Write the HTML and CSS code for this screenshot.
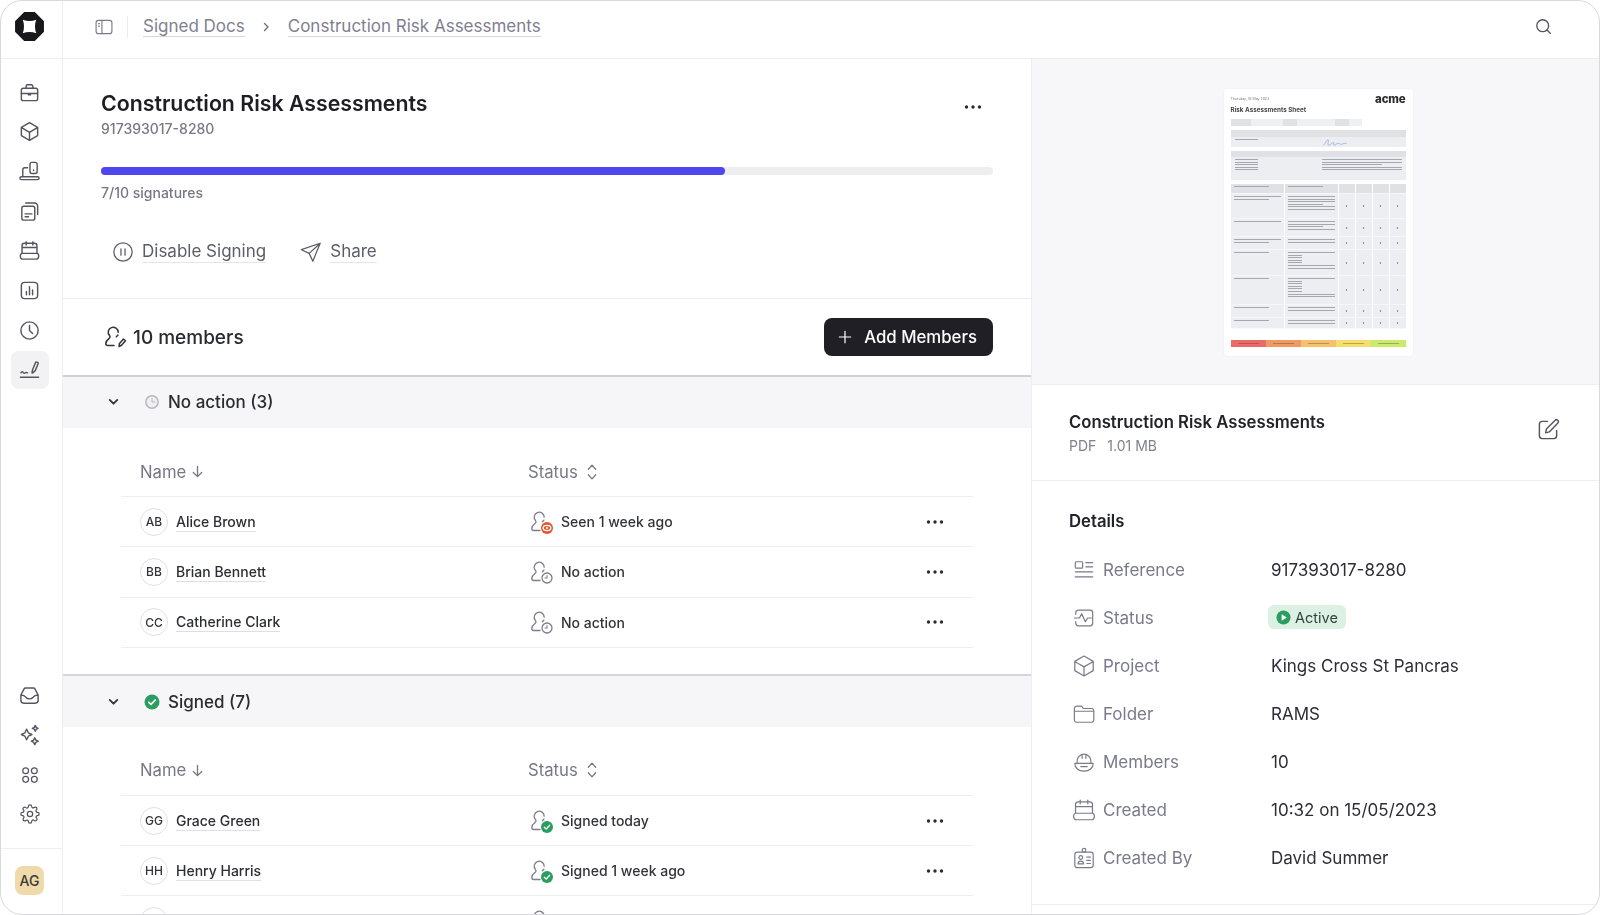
FILE: index.html
```html
<!DOCTYPE html>
<html lang="en">
<head>
<meta charset="utf-8">
<title>Construction Risk Assessments</title>
<link rel="stylesheet" href="styles.css">
</head>
<body>
<svg class="sprite" aria-hidden="true">
  <defs>
    <symbol id="i-brief" viewBox="0 0 24 24"><rect x="3.5" y="7.5" width="17" height="13" rx="2"/><path d="M8.5 7.5V5.5a1.5 1.5 0 0 1 1.5-1.5h4a1.5 1.5 0 0 1 1.5 1.5v2M3.5 13h17M11 13h2v1.5h-2z"/></symbol>
    <symbol id="i-box" viewBox="0 0 24 24"><path d="M12 2.8l8.5 4.9v8.6L12 21.2l-8.5-4.9V7.7zM3.8 8l8.2 4.8L20.2 8M12 12.8v8.2"/></symbol>
    <symbol id="i-laptop" viewBox="0 0 24 24"><rect x="12.5" y="2.5" width="7.5" height="11.5" rx="2"/><path d="M5 17.5V10a2 2 0 0 1 2-2h3M3.5 17.5h17a1.5 1.5 0 0 1 1.5 1.5 1.5 1.5 0 0 1-1.5 1.5h-17A1.5 1.5 0 0 1 2 19a1.5 1.5 0 0 1 1.5-1.5zM16.2 10.5v.4"/></symbol>
    <symbol id="i-docs" viewBox="0 0 24 24"><rect x="4" y="6.5" width="13.5" height="14.5" rx="2"/><path d="M8 3.2h9.5a3 3 0 0 1 3 3V15M7.5 14.5h7M7.5 17.5h3.5"/></symbol>
    <symbol id="i-cal" viewBox="0 0 24 24"><path d="M4.200 15V7a2.500 2.500 0 0 1 2.500-2.500h10.600A2.500 2.500 0 0 1 19.800 7v8M4.200 8.800h15.600M8.500 2.800v3.400M15.500 2.800v3.400M4.500 15h15a2 2 0 0 1 2 2v1.500a2.500 2.500 0 0 1-2.500 2.500H5a2.500 2.500 0 0 1-2.500-2.500V17a2 2 0 0 1 2-2z"/></symbol>
    <symbol id="i-chart" viewBox="0 0 24 24"><rect x="3.500" y="3.500" width="17" height="17" rx="3.500"/><path d="M8.800 16.500v-3.500M12 16.500V8M15.200 16.500v-5"/></symbol>
    <symbol id="i-clock" viewBox="0 0 24 24"><circle cx="12" cy="12" r="9"/><path d="M12 6.800V12l3.200 3.200"/></symbol>
    <symbol id="i-sign" viewBox="0 0 24 24"><path d="M2.500 20h19M3 15.500c1-1.500 1.800-1.500 2.500-.3.700 1 1.200.8 2 .3.700-.4 1.500-.4 2.500 0M14.500 15.500l.8-3.500 3-7.200a1 1 0 0 1 1.300-.5l.9.400a1 1 0 0 1 .5 1.300l-3 7.200-2.700 2.500z"/></symbol>
    <symbol id="i-inbox" viewBox="0 0 24 24"><path d="M3 11.500l3.200-6.200A2 2 0 0 1 8 4.200h8a2 2 0 0 1 1.800 1.100l3.200 6.200V17a3 3 0 0 1-3 3H6a3 3 0 0 1-3-3zM3 11.500c3 0 4 .5 5.200 2.300.8 1 2 1.700 3.800 1.700s3-.7 3.800-1.700C17 12 18 11.500 21 11.500"/></symbol>
    <symbol id="i-spark" viewBox="0 0 24 24"><path d="M9 6.500l1.800 3.700 3.700 1.800-3.700 1.800L9 17.500l-1.800-3.700L3.500 12l3.700-1.800zM18 2.500l1 2 2 1-2 1-1 2-1-2-2-1 2-1zM17.500 15.500l1.200 2.300 2.300 1.200-2.300 1.200-1.200 2.300-1.200-2.300L14 19l2.300-1.200z"/></symbol>
    <symbol id="i-apps" viewBox="0 0 24 24"><circle cx="6.800" cy="6.800" r="3.500"/><circle cx="17.200" cy="6.800" r="3.500"/><circle cx="6.800" cy="17.200" r="3.500"/><circle cx="17.200" cy="17.200" r="3.500"/></symbol>
    <symbol id="i-gear" viewBox="0 0 24 24"><circle cx="12" cy="12" r="3.200"/><path d="M19.400 15a1.650 1.650 0 0 0 .33 1.820l.06.06a2 2 0 0 1 0 2.830 2 2 0 0 1-2.830 0l-.06-.06a1.650 1.650 0 0 0-1.820-.33 1.650 1.650 0 0 0-1 1.510V21a2 2 0 0 1-2 2 2 2 0 0 1-2-2v-.09A1.650 1.650 0 0 0 9 19.400a1.650 1.650 0 0 0-1.820.33l-.06.06a2 2 0 0 1-2.830 0 2 2 0 0 1 0-2.830l.06-.06a1.650 1.650 0 0 0 .33-1.820 1.650 1.650 0 0 0-1.510-1H3a2 2 0 0 1-2-2 2 2 0 0 1 2-2h.09A1.650 1.650 0 0 0 4.600 9a1.650 1.650 0 0 0-.33-1.820l-.06-.06a2 2 0 0 1 0-2.830 2 2 0 0 1 2.830 0l.06.06a1.650 1.650 0 0 0 1.820.33H9a1.650 1.650 0 0 0 1-1.510V3a2 2 0 0 1 2-2 2 2 0 0 1 2 2v.09a1.650 1.650 0 0 0 1 1.510 1.650 1.650 0 0 0 1.820-.33l.06-.06a2 2 0 0 1 2.830 0 2 2 0 0 1 0 2.830l-.06.06a1.650 1.650 0 0 0-.33 1.820V9a1.650 1.650 0 0 0 1.510 1H21a2 2 0 0 1 2 2 2 2 0 0 1-2 2h-.09a1.650 1.650 0 0 0-1.510 1z"/></symbol>
    <symbol id="i-person" viewBox="0 0 24 24"><path d="M15.200 7.200a5 5 0 1 0-8.700 3.400c.8.900.6 2-.3 2.700C4 15 2.800 16.500 2.800 18.500c0 1.300.9 2 2 2H11M13.300 11.800c.4-.6 1.100-1 1.600-1.700"/></symbol>
    <symbol id="i-dots" viewBox="0 0 18 4"><circle cx="2.500" cy="2" r="1.700"/><circle cx="9" cy="2" r="1.700"/><circle cx="15.500" cy="2" r="1.700"/></symbol>
    <symbol id="i-sort" viewBox="0 0 16 24"><path d="M4 9l4-4.500L12 9M4 15l4 4.500 4-4.500"/></symbol>
    <symbol id="i-down" viewBox="0 0 16 16"><path d="M8 2.500v11M3.500 9L8 13.500 12.500 9"/></symbol>
    <symbol id="i-chev" viewBox="0 0 12 12"><path d="M2.500 4.500L6 8l3.500-3.500"/></symbol>
    <symbol id="b-eye" viewBox="0 0 24 24"><use href="#i-person" class="stroke-person"/><circle cx="18" cy="18" r="6" class="fill-red"/><ellipse cx="18" cy="18" rx="3.800" ry="2.600" class="badge-line"/><circle cx="18" cy="18" r="1" class="fill-white"/></symbol>
    <symbol id="b-clock" viewBox="0 0 24 24"><use href="#i-person" class="stroke-person"/><circle cx="18" cy="18" r="5" class="badge-clock"/><path d="M18 15.500V18h-2" class="badge-hand"/></symbol>
    <symbol id="b-check" viewBox="0 0 24 24"><use href="#i-person" class="stroke-person"/><circle cx="18" cy="18" r="6" class="fill-green"/><path d="M15.300 18.200l1.900 1.800 3.500-3.700" class="badge-line"/></symbol>
  </defs>
</svg>

<div class="app">
  <aside class="side">
    <div class="logo-cell">
      <svg class="logo" viewBox="0 0 28 28"><path class="logo-bg" d="M9 .6h10L27.400 9v10L19 27.400H9L.6 19V9z"/><path class="logo-fg" d="M7.500 7.500c4 1.600 9 1.600 13 0-1.600 4-1.600 9 0 13-4-1.600-9-1.600-13 0 1.600-4 1.600-9 0-13z"/></svg>
    </div>
    <nav class="nav">
      <a class="nav-item"><svg class="ic"><use href="#i-brief"/></svg></a>
      <a class="nav-item"><svg class="ic"><use href="#i-box"/></svg></a>
      <a class="nav-item"><svg class="ic"><use href="#i-laptop"/></svg></a>
      <a class="nav-item"><svg class="ic"><use href="#i-docs"/></svg></a>
      <a class="nav-item"><svg class="ic"><use href="#i-cal"/></svg></a>
      <a class="nav-item"><svg class="ic"><use href="#i-chart"/></svg></a>
      <a class="nav-item"><svg class="ic"><use href="#i-clock"/></svg></a>
      <a class="nav-item is-active"><svg class="ic"><use href="#i-sign"/></svg></a>
    </nav>
    <nav class="nav nav-bottom">
      <a class="nav-item"><svg class="ic"><use href="#i-inbox"/></svg></a>
      <a class="nav-item"><svg class="ic"><use href="#i-spark"/></svg></a>
      <a class="nav-item"><svg class="ic ic-sm"><use href="#i-apps"/></svg></a>
      <a class="nav-item"><svg class="ic ic-sm"><use href="#i-gear"/></svg></a>
    </nav>
    <div class="side-foot"><span class="me">AG</span></div>
  </aside>

  <div class="content">
    <header class="topbar">
      <svg class="panel-ic" viewBox="0 0 24 24"><rect x="2.500" y="4" width="19" height="16" rx="3"/><path d="M9.500 4v16M5.500 8h1M5.500 11h1"/></svg>
      <span class="topbar-sep"></span>
      <a class="crumb">Signed Docs</a>
      <svg class="crumb-chev" viewBox="0 0 12 12"><path d="M4.500 2.500L8 6 4.500 9.500"/></svg>
      <a class="crumb">Construction Risk Assessments</a>
      <svg class="search-ic" viewBox="0 0 24 24"><circle cx="11" cy="11" r="7.500"/><path d="M16.500 16.500L20.500 20.500"/></svg>
    </header>

    <div class="body">
      <main class="main">
        <section class="doc-head">
          <div class="doc-title-row">
            <div>
              <h1 class="doc-title">Construction Risk Assessments</h1>
              <div class="doc-ref">917393017-8280</div>
            </div>
            <svg class="dots dots-head"><use href="#i-dots"/></svg>
          </div>
          <div class="progress"><div class="progress-fill"></div></div>
          <div class="sigs">7/10 signatures</div>
          <div class="actions">
            <a class="action">
              <svg class="action-ic" viewBox="0 0 24 24"><circle cx="12" cy="12" r="10"/><path d="M9.800 8.500v7M14.200 8.500v7"/></svg>
              <span class="action-label">Disable Signing</span>
            </a>
            <a class="action">
              <svg class="action-ic" viewBox="0 0 24 24"><path d="M22 2.500L1.500 9.500l8.500 4 4 8.500zM22 2.500L10 13.500"/></svg>
              <span class="action-label">Share</span>
            </a>
          </div>
        </section>

        <section class="members-bar">
          <div class="members-count">
            <svg class="members-ic" viewBox="0 0 24 24"><use href="#i-person"/><path d="M16 21.500l.5-3 4-4.500 2 1.700-4 4.600z"/></svg>
            <span>10 members</span>
          </div>
          <button class="add-btn"><svg class="plus" viewBox="0 0 16 16"><path d="M8 1.500v13M1.500 8h13"/></svg>Add Members</button>
        </section>

        <section class="group">
          <div class="group-head">
            <svg class="chev"><use href="#i-chev"/></svg>
            <svg class="group-ic" viewBox="0 0 16 16"><circle class="gi-ring" cx="8" cy="8" r="6.200"/><path class="gi-hand" d="M8 4.500V8h3"/></svg>
            <span>No action (3)</span>
          </div>
          <div class="table">
            <div class="row row-head">
              <div class="th th-name">Name<svg class="th-down"><use href="#i-down"/></svg></div>
              <div class="th">Status<svg class="th-sort"><use href="#i-sort"/></svg></div>
              <div></div>
            </div>
            <div class="row">
              <div class="person"><span class="avatar">AB</span><span class="name">Alice Brown</span></div>
              <div class="status"><svg class="status-ic"><use href="#b-eye"/></svg>Seen 1 week ago</div>
              <div class="more"><svg class="dots"><use href="#i-dots"/></svg></div>
            </div>
            <div class="row">
              <div class="person"><span class="avatar">BB</span><span class="name">Brian Bennett</span></div>
              <div class="status"><svg class="status-ic"><use href="#b-clock"/></svg>No action</div>
              <div class="more"><svg class="dots"><use href="#i-dots"/></svg></div>
            </div>
            <div class="row">
              <div class="person"><span class="avatar">CC</span><span class="name">Catherine Clark</span></div>
              <div class="status"><svg class="status-ic"><use href="#b-clock"/></svg>No action</div>
              <div class="more"><svg class="dots"><use href="#i-dots"/></svg></div>
            </div>
          </div>
        </section>

        <section class="group">
          <div class="group-head">
            <svg class="chev"><use href="#i-chev"/></svg>
            <svg class="group-ic" viewBox="0 0 16 16"><circle class="gi-green" cx="8" cy="8" r="7.500"/><path class="gi-check" d="M4.800 8.300l2.200 2.100 4.200-4.400"/></svg>
            <span>Signed (7)</span>
          </div>
          <div class="table">
            <div class="row row-head">
              <div class="th th-name">Name<svg class="th-down"><use href="#i-down"/></svg></div>
              <div class="th">Status<svg class="th-sort"><use href="#i-sort"/></svg></div>
              <div></div>
            </div>
            <div class="row">
              <div class="person"><span class="avatar">GG</span><span class="name">Grace Green</span></div>
              <div class="status"><svg class="status-ic"><use href="#b-check"/></svg>Signed today</div>
              <div class="more"><svg class="dots"><use href="#i-dots"/></svg></div>
            </div>
            <div class="row">
              <div class="person"><span class="avatar">HH</span><span class="name">Henry Harris</span></div>
              <div class="status"><svg class="status-ic"><use href="#b-check"/></svg>Signed 1 week ago</div>
              <div class="more"><svg class="dots"><use href="#i-dots"/></svg></div>
            </div>
            <div class="row">
              <div class="person"><span class="avatar"></span></div>
              <div class="status"><svg class="status-ic"><use href="#b-check"/></svg></div>
              <div class="more"></div>
            </div>
          </div>
        </section>
      </main>

      <aside class="panel">
        <div class="preview">
          <div class="sheet">
            <div class="sheet-inner">
              <div class="sh-top"><span class="sh-date">Thursday, 18 May 2023</span><span class="sh-logo">acme</span></div>
              <div class="sh-title">Risk Assessments Sheet</div>
              <div class="sh-meta"><b class="m1"></b><i class="m2"></i><b class="m3"></b><i class="m4"></i><b class="m5"></b><i class="m6"></i></div>
              <div class="sh-two">
                <div class="sh-hd"></div><div class="sh-hd"></div>
                <div class="sh-bd sh-bd-a"><span class="ln ln-s"></span></div>
                <div class="sh-bd sh-bd-a"><svg class="sh-sig" viewBox="0 0 30 8"><path d="M2 7c3-3 3-6 5-6S5 7 8 7s3-3 5-3-1 3 1 3 3-2 5-2 2 2 4 1 3-1 5-1"/></svg></div>
              </div>
              <div class="sh-two">
                <div class="sh-hd"></div><div class="sh-hd"></div>
                <div class="sh-bd sh-bd-b"><span class="ln ln-s"></span><span class="ln ln-s"></span><span class="ln ln-s"></span><span class="ln ln-s"></span><span class="ln ln-s"></span></div>
                <div class="sh-bd sh-bd-b"><span class="ln"></span><span class="ln"></span><span class="ln ln-m"></span><span class="ln"></span><span class="ln"></span></div>
              </div>
              <div class="sh-table">
                <div class="st-row st-head"><div><span class="ln ln-m"></span></div><div><span class="ln ln-m"></span></div><div></div><div></div><div></div><div></div></div>
                <div class="st-row r1"><div><span class="ln"></span><span class="ln ln-m"></span></div><div><span class="ln"></span><span class="ln"></span><span class="ln"></span><span class="ln ln-m"></span><span class="ln"></span><span class="ln"></span></div><div class="st-n"><u></u></div><div class="st-n"><u></u></div><div class="st-n"><u></u></div><div class="st-n"><u></u></div></div>
                <div class="st-row r2"><div><span class="ln"></span></div><div><span class="ln"></span><span class="ln"></span><span class="ln ln-m"></span><span class="ln"></span></div><div class="st-n"><u></u></div><div class="st-n"><u></u></div><div class="st-n"><u></u></div><div class="st-n"><u></u></div></div>
                <div class="st-row r3"><div><span class="ln"></span><span class="ln ln-m"></span></div><div><span class="ln"></span><span class="ln"></span></div><div class="st-n"><u></u></div><div class="st-n"><u></u></div><div class="st-n"><u></u></div><div class="st-n"><u></u></div></div>
                <div class="st-row r4"><div><span class="ln ln-m"></span></div><div><span class="ln"></span><span class="ln ln-s"></span><span class="ln ln-s"></span><span class="ln ln-s"></span><span class="ln ln-s"></span><span class="ln"></span><span class="ln"></span></div><div class="st-n"><u></u></div><div class="st-n"><u></u></div><div class="st-n"><u></u></div><div class="st-n"><u></u></div></div>
                <div class="st-row r5"><div><span class="ln ln-m"></span></div><div><span class="ln"></span><span class="ln ln-s"></span><span class="ln ln-s"></span><span class="ln ln-s"></span><span class="ln ln-s"></span><span class="ln ln-s"></span><span class="ln"></span><span class="ln"></span></div><div class="st-n"><u></u></div><div class="st-n"><u></u></div><div class="st-n"><u></u></div><div class="st-n"><u></u></div></div>
                <div class="st-row r6"><div><span class="ln ln-m"></span></div><div><span class="ln"></span><span class="ln"></span></div><div class="st-n"><u></u></div><div class="st-n"><u></u></div><div class="st-n"><u></u></div><div class="st-n"><u></u></div></div>
                <div class="st-row r7"><div><span class="ln ln-m"></span></div><div><span class="ln"></span><span class="ln"></span></div><div class="st-n"><u></u></div><div class="st-n"><u></u></div><div class="st-n"><u></u></div><div class="st-n"><u></u></div></div>
              </div>
              <div class="sh-legend"><span class="l1"></span><span class="l2"></span><span class="l3"></span><span class="l4"></span><span class="l5"></span></div>
            </div>
          </div>
        </div>

        <section class="file-info">
          <div>
            <div class="file-name">Construction Risk Assessments</div>
            <div class="file-meta"><span>PDF</span><span>1.01 MB</span></div>
          </div>
          <svg class="edit-ic" viewBox="0 0 24 24"><path d="M11 3.500H5.500a3 3 0 0 0-3 3v12a3 3 0 0 0 3 3h12a3 3 0 0 0 3-3V13"/><path d="M9 15.500l.8-4L19 2.300a1.800 1.800 0 0 1 2.500 0l.3.300a1.800 1.800 0 0 1 0 2.500L12.800 14.500z"/></svg>
        </section>

        <section class="details">
          <h2 class="details-title">Details</h2>
          <dl class="detail-list">
            <div class="detail">
              <dt><svg class="detail-ic" viewBox="0 0 24 24"><rect x="2.500" y="3" width="8" height="7" rx="1"/><path d="M14 4h7.500M14 8.500h7.500M2.500 14h19M2.500 19.500h19"/></svg>Reference</dt>
              <dd>917393017-8280</dd>
            </div>
            <div class="detail">
              <dt><svg class="detail-ic" viewBox="0 0 24 24"><path d="M3 8V6.500a3 3 0 0 1 3-3h12.500a3 3 0 0 1 3 3v11a3 3 0 0 1-3 3H6a3 3 0 0 1-3-3V16M1.500 12H7l2.500-4.500 4 8.500 2.500-4h4"/></svg>Status</dt>
              <dd><span class="pill"><svg class="pill-ic" viewBox="0 0 16 16"><circle class="pill-bg" cx="8" cy="8" r="7.500"/><path class="pill-play" d="M6 4.500l5.500 3.500L6 11.500z"/></svg>Active</span></dd>
            </div>
            <div class="detail">
              <dt><svg class="detail-ic detail-ic-lg"><use href="#i-box"/></svg>Project</dt>
              <dd>Kings Cross St Pancras</dd>
            </div>
            <div class="detail">
              <dt><svg class="detail-ic" viewBox="0 0 24 24"><path d="M1.500 6a2.500 2.500 0 0 1 2.500-2.500h4.500a2 2 0 0 1 1.700 1l1 1.500h9a2.500 2.500 0 0 1 2.500 2.500v10a2.500 2.500 0 0 1-2.500 2.500H4A2.500 2.500 0 0 1 1.500 18.500zM1.500 9h21"/></svg>Folder</dt>
              <dd>RAMS</dd>
            </div>
            <div class="detail">
              <dt><svg class="detail-ic" viewBox="0 0 24 24"><path d="M4.500 13V11a7.500 7.500 0 0 1 15 0v2M10 4v4M14 4v4M2 13.500h20c0 5-4 8.500-10 8.500S2 18.500 2 13.500zM8.500 17h7"/></svg>Members</dt>
              <dd>10</dd>
            </div>
            <div class="detail">
              <dt><svg class="detail-ic detail-ic-lg"><use href="#i-cal"/></svg>Created</dt>
              <dd>10:32 on 15/05/2023</dd>
            </div>
            <div class="detail">
              <dt><svg class="detail-ic" viewBox="0 0 24 24"><rect x="2" y="5.500" width="20" height="17" rx="2.500"/><circle cx="12" cy="3.500" r="2"/><circle cx="8.500" cy="11.500" r="2"/><path d="M5.500 18.500c0-2 1-3 3-3s3 1 3 3zM15 11h4M15 14.500h4M15 18h4"/></svg>Created By</dt>
              <dd>David Summer</dd>
            </div>
          </dl>
        </section>
      </aside>
    </div>
  </div>
</div>
</body>
</html>
```

FILE: styles.css
```css
* { box-sizing: border-box; margin: 0; padding: 0; }

html, body {
  width: 1600px;
  height: 915px;
  overflow: hidden;
  background: #fff;
}

body {
  font-family: Inter, "Liberation Sans", sans-serif;
  color: #22222a;
}

.sprite { width: 0; height: 0; display: block; position: absolute; }

svg { fill: none; stroke: currentColor; stroke-linecap: round; stroke-linejoin: round; flex: none; }

.app {
  display: flex;
  width: 1600px;
  height: 915px;
  border: 1px solid #d9d9dd;
  border-radius: 22px;
  overflow: hidden;
  background: #fff;
  filter: blur(.3px);
}

/* sidebar */
.side {
  width: 62px;
  flex: none;
  display: flex;
  flex-direction: column;
  border-right: 1px solid #eeeef1;
}

.logo-cell {
  height: 58px;
  flex: none;
  display: flex;
  align-items: center;
  justify-content: center;
  padding: 0 5px 6px 0;
  border-bottom: 1px solid #eeeef1;
}

.logo { width: 29px; height: 29px; stroke: none; }
.logo-bg { fill: #17171c; stroke: #17171c; stroke-width: 1; }
.logo-fg { fill: #fff; stroke: none; }

.nav {
  display: flex;
  flex-direction: column;
  align-items: center;
  padding: 14px 4px 0 0;
  color: #55555f;
}

.nav-bottom { margin-top: auto; padding: 0 4px 13px 0; }

.nav-item {
  width: 38px;
  height: 38px;
  margin-bottom: 1.7px;
  display: flex;
  align-items: center;
  justify-content: center;
  border-radius: 8px;
}

.nav-item.is-active { background: #f2f2f5; }

.ic { width: 23px; height: 23px; stroke-width: 1.5; }
.ic-sm { width: 20px; height: 20px; }

.side-foot {
  height: 66px;
  flex: none;
  padding: 0 4px 2px 0;
  border-top: 1px solid #eeeef1;
  display: flex;
  align-items: center;
  justify-content: center;
}

.me {
  width: 29px;
  height: 29px;
  border-radius: 8px;
  background: #f0d9ab;
  color: #3a3a3a;
  font-size: 14px;
  font-weight: 500;
  display: flex;
  align-items: center;
  justify-content: center;
}

/* content */
.content { flex: 1; min-width: 0; display: flex; flex-direction: column; }

.topbar {
  height: 58px;
  flex: none;
  display: flex;
  align-items: center;
  padding: 0 46px 6px 31px;
  border-bottom: 1px solid #eeeef1;
  font-size: 17px;
}

.panel-ic { width: 20px; height: 20px; color: #7a7a88; stroke-width: 1.4; }
.topbar-sep { width: 1px; height: 22px; background: #ececf0; margin: 0 15px 0 13px; }

.crumb {
  color: #7f7f8f;
  border-bottom: 1px solid #d6d6de;
  line-height: 19px;
}

.crumb-chev { width: 12px; height: 12px; margin: 0 16px 0 15px; color: #70707e; stroke-width: 1.4; }

.search-ic { width: 19px; height: 19px; margin-left: auto; color: #55555f; stroke-width: 1.7; }

.body { flex: 1; min-height: 0; display: flex; }

.main {
  width: 969px;
  flex: none;
  border-right: 1px solid #eeeef1;
  overflow: hidden;
}

/* document head */
.doc-head {
  padding: 30px 38px 26px;
  border-bottom: 1px solid #eeeef1;
}

.doc-title-row { display: flex; justify-content: space-between; align-items: flex-start; }

.doc-title {
  font-size: 21.300px;
  line-height: 28px;
  font-weight: 600;
  color: #1d1d23;
}

.doc-ref {
  margin-top: 1.500px;
  font-size: 14px;
  font-weight: 500;
  line-height: 20px;
  color: #777786;
}

.dots { width: 18px; height: 4px; fill: #2b2b33; stroke: none; }
.dots-head { margin: 16px 11px 0 0; }

.progress {
  margin-top: 28px;
  height: 8px;
  border-radius: 4px;
  background: #eeeef1;
}

.progress-fill {
  width: 624px;
  height: 100%;
  border-radius: 4px;
  background: #4f46ee;
}

.sigs {
  margin-top: 8.500px;
  font-size: 14px;
  font-weight: 500;
  line-height: 20px;
  color: #777786;
}

.actions {
  display: flex;
  align-items: center;
  height: 40px;
  margin-top: 29px;
  padding-left: 11px;
  gap: 34px;
}

.action { display: flex; align-items: center; gap: 8px; }
.action-ic { width: 22px; height: 22px; color: #5d5d69; stroke-width: 1.4; }

.action-label {
  font-size: 17px;
  line-height: 21px;
  color: #5d5d69;
  border-bottom: 1px solid #e4e4ea;
}

/* members bar */
.members-bar {
  height: 78px;
  display: flex;
  align-items: center;
  justify-content: space-between;
  padding: 0 38px 0 40px;
  border-bottom: 2px solid #cfcfd4;
}

.members-count {
  display: flex;
  align-items: center;
  gap: 6px;
  font-size: 19px;
  font-weight: 500;
  color: #2a2a32;
}

.members-ic { width: 24px; height: 24px; stroke-width: 1.5; color: #33333b; }

.add-btn {
  display: flex;
  align-items: center;
  gap: 12px;
  height: 38px;
  padding: 0 16px 0 14px;
  border: 0;
  border-radius: 8px;
  background: #1f1f25;
  color: #fff;
  font: 500 16.800px Inter, "Liberation Sans", sans-serif;
}

.plus { width: 14px; height: 14px; stroke-width: 1.400; }

/* groups */
.group { margin-bottom: 26px; }

.group + .group { border-top: 2px solid #d5d5de; }

.group-head {
  height: 51px;
  display: flex;
  align-items: center;
  padding: 0 0 2px 44px;
  background: #f6f6f8;
  font-size: 17px;
  font-weight: 500;
  color: #2a2a32;
}

.group + .group .group-head { padding: 1px 0 0 44px; }

.chev { width: 13px; height: 13px; color: #33333b; stroke-width: 1.700; }
.group-ic { width: 16px; height: 16px; margin: 0 8px 0 24px; stroke: none; }

.gi-ring { fill: #f0f0f3; stroke: #b9b9c0; stroke-width: 1.500; }
.gi-hand { stroke: #b9b9c0; stroke-width: 1; fill: none; }
.gi-green { fill: #2a9d60; }
.gi-check { stroke: #fff; stroke-width: 1.800; fill: none; }

.table { margin: 0 58px; padding-top: 18px; }

.row {
  display: grid;
  grid-template-columns: 407px 1fr 76px;
  align-items: center;
  height: 50.300px;
  border-bottom: 1px solid #eeeef1;
}

.row-head { height: 51px; padding-top: 1px; }

.th {
  display: flex;
  align-items: center;
  font-size: 16.700px;
  color: #777786;
}

.th-name { padding-left: 19px; }
.th-down { width: 15px; height: 15px; margin-left: 4px; stroke-width: 1.400; }
.th-sort { width: 16px; height: 22px; margin-left: 6px; stroke-width: 1.400; }

.person { display: flex; align-items: center; gap: 8px; padding-left: 19px; }

.avatar {
  width: 28px;
  height: 28px;
  flex: none;
  border: 1px solid #dfdfe4;
  border-radius: 50%;
  display: flex;
  align-items: center;
  justify-content: center;
  font-size: 12px;
  font-weight: 500;
  color: #33333b;
}

.name {
  font-size: 14px;
  font-weight: 500;
  line-height: 19px;
  color: #2d2d35;
  border-bottom: 1px solid #dedee4;
}

.status {
  display: flex;
  align-items: center;
  gap: 8px;
  font-size: 14px;
  font-weight: 500;
  color: #33333b;
  padding-left: 1px;
}

.status-ic { width: 24px; height: 24px; color: #7d7d8c; stroke-width: 1.300; }

.stroke-person { stroke: #7d7d8c; }
.fill-red { fill: #e4552f; stroke: none; }
.fill-green { fill: #2a9d60; stroke: none; }
.fill-white { fill: #fff; stroke: none; }
.badge-line { stroke: #fff; stroke-width: 1.300; fill: none; }
.badge-clock { fill: #fff; stroke: #7d7d8c; stroke-width: 1.300; }
.badge-hand { stroke: #7d7d8c; stroke-width: 1.100; fill: none; }

.more { display: flex; justify-content: center; }

/* right panel */
.panel { flex: 1; min-width: 0; overflow: hidden; }

.preview {
  height: 326px;
  padding: 30px 0 0 5px;
  display: flex;
  justify-content: center;
  background: #f7f7f9;
  border-bottom: 1px solid #eeeef1;
}

.sheet {
  width: 189px;
  height: 267px;
  background: #fff;
  border-radius: 4px;
  box-shadow: 0 0 3px rgba(0, 0, 0, .05);
  overflow: hidden;
}

.sheet-inner {
  height: 100%;
  padding: 5px 7px 0;
  filter: blur(.75px);
}

.sh-top { display: flex; justify-content: space-between; align-items: center; height: 9px; }
.sh-date { font-size: 3.500px; color: #777; }
.sh-logo { font-size: 11.500px; font-weight: 800; color: #2b2b2b; letter-spacing: -.2px; }
.sh-title { margin-top: 3px; font-size: 6.300px; line-height: 9px; font-weight: 700; color: #444; }

.sh-meta {
  margin-top: 4px;
  display: flex;
  height: 7px;
}

.sh-meta b { background: #dfe1e5; }
.sh-meta i { background: #eff0f3; }
.m1 { width: 20px; } .m2 { width: 32px; } .m3 { width: 14px; } .m4 { width: 38px; } .m5 { width: 14px; } .m6 { width: 13px; }

.sh-two {
  margin-top: 4px;
  display: grid;
  grid-template-columns: 87px 1fr;
}

.sh-hd { height: 6.500px; background: #dfe1e5; }

.sh-bd { background: #eceef1; padding: 2px 4px; }
.sh-bd-a { height: 10px; }
.sh-bd-b { height: 23px; }

.sh-sig { display: block; width: 26px; height: 7px; color: #6d8fd6; stroke-width: .6; }

.ln { display: block; height: 1px; margin-bottom: 1.600px; background: #a5a8af; }
.ln-m { width: 75%; }
.ln-s { width: 30%; }

.sh-table { margin-top: 4px; }

.st-row {
  display: grid;
  grid-template-columns: 53px 53px repeat(4, 1fr);
  gap: 0 1px;
  border-bottom: 1px solid #f6f7f8;
}

.st-row > div { background: #eceef1; padding: 2px 3px; overflow: hidden; }
.st-head > div { background: #dfe1e5; }
.st-head { height: 10px; }
.r1 { height: 25px; } .r2 { height: 18px; } .r3 { height: 13px; } .r4 { height: 26px; } .r5 { height: 29px; } .r6 { height: 13px; } .r7 { height: 11px; }

.st-row > .st-n { display: flex; align-items: center; justify-content: center; }
.st-n u { width: 1.500px; height: 2px; background: #888b93; display: block; }

.sh-legend {
  margin-top: 11px;
  display: flex;
  height: 6.500px;
}

.sh-legend span { flex: 1; display: flex; align-items: center; justify-content: center; }
.sh-legend span::before { content: ""; width: 60%; height: 1.500px; background: rgba(90, 50, 30, .35); }
.l1 { background: #ea6a6a; }
.l2 { background: #ee9a62; }
.l3 { background: #f5c16d; }
.l4 { background: #f4df6c; }
.l5 { background: #c9ec6c; }

.file-info {
  height: 96px;
  padding: 25px 39px 0 37px;
  display: flex;
  justify-content: space-between;
  align-items: flex-start;
  border-bottom: 1px solid #eeeef1;
}

.file-name { font-size: 16.700px; line-height: 24px; font-weight: 600; color: #22222a; }

.file-meta {
  margin-top: 2px;
  display: flex;
  gap: 11px;
  font-size: 14px;
  line-height: 20px;
  color: #7f7f8f;
}

.edit-ic { width: 23px; height: 23px; margin-top: 8px; color: #55555f; stroke-width: 1.500; }

.details {
  padding: 28px 37px 22px;
  border-bottom: 1px solid #eeeef1;
}

.details-title { font-size: 16.700px; line-height: 24px; font-weight: 600; color: #22222a; }

.detail-list { margin-top: 13px; }

.detail {
  height: 48px;
  display: grid;
  grid-template-columns: 198px 1fr;
  align-items: center;
  padding-left: 4px;
  font-size: 17px;
}

.detail dt { display: flex; align-items: center; gap: 8px; color: #7a7a8a; }
.detail dd { color: #2d2d35; }
.detail-ic { width: 22px; height: 22px; color: #7a7a8a; stroke-width: 1.300; }
.detail-ic-lg { width: 26px; height: 26px; margin: 0 -2px; stroke-width: 1.150; }

.pill {
  display: inline-flex;
  align-items: center;
  gap: 4px;
  height: 24px;
  margin: -2px 0 0 -3px;
  padding: 0 8px;
  border-radius: 6px;
  background: #dcf0e4;
  font-size: 14.500px;
  color: #33413a;
}

.pill-ic { width: 15px; height: 15px; stroke: none; }
.pill-bg { fill: #2a9d60; }
.pill-play { fill: #fff; }
```
